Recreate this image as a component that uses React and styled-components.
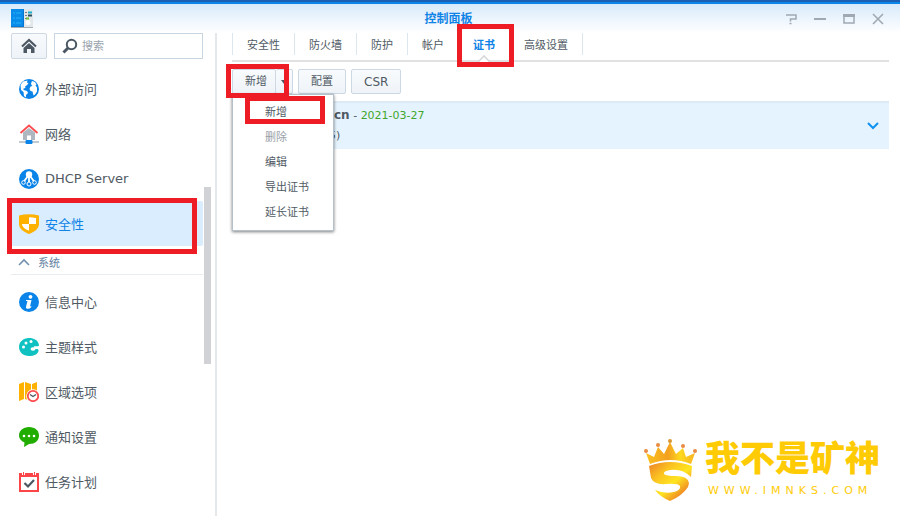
import React, { useState } from 'react';
import styled, { createGlobalStyle } from 'styled-components';

const GlobalStyle = createGlobalStyle`
  * {
    box-sizing: border-box;
  }

  body {
    margin: 0;
    background: #ffffff;
    color: #505a64;
    font-family: 'DejaVu Sans', 'Noto Sans CJK SC', sans-serif;
    font-size: 11px;
  }

  button,
  input {
    font: inherit;
    color: inherit;
  }
`;

const StyledWindow = styled.div`
  display: flex;
  flex-direction: column;
  min-height: 100vh;
  overflow: hidden;
  position: relative;
  border-top: 2px solid #1a5fb4;
`;

const StyledTitleBar = styled.header`
  display: grid;
  grid-template-columns: 1fr auto 1fr;
  align-items: center;
  height: 31px;
  padding: 0 14px 0 11px;
  border-top: 2px solid #0a86ea;
  background: linear-gradient(#d8eafa, #ffffff);
`;

const StyledTitle = styled.h1`
  margin: 0;
  font-size: 12px;
  line-height: 16px;
  color: #0f83e6;
`;

const StyledWindowButtons = styled.div`
  display: flex;
  justify-content: flex-end;
  gap: 13px;
`;

const StyledIconButton = styled.button`
  display: flex;
  align-items: center;
  justify-content: center;
  width: 16px;
  height: 16px;
  padding: 0;
  border: none;
  background: none;
  cursor: pointer;
`;

const StyledBody = styled.div`
  display: flex;
  flex: 1;
`;

const StyledSidebar = styled.aside`
  flex: none;
  width: 217px;
  padding-left: 11px;
  border-right: 2px solid #e4e8ea;
`;

const StyledSearchRow = styled.div`
  display: flex;
  gap: 7px;
  width: 192px;
  margin-bottom: 7px;
`;

const StyledHomeButton = styled.button`
  display: flex;
  align-items: center;
  justify-content: center;
  width: 36px;
  height: 26px;
  padding: 0;
  border: 1px solid #ccd8e4;
  border-radius: 2px;
  background: linear-gradient(#f8fafc, #eef3f8);
  cursor: pointer;
`;

const StyledSearch = styled.label`
  display: flex;
  flex: 1;
  align-items: center;
  gap: 4px;
  min-width: 0;
  height: 26px;
  padding-left: 7px;
  border: 1px solid #c8d6e4;
`;

const StyledSearchInput = styled.input`
  flex: 1;
  min-width: 0;
  height: 20px;
  padding: 0;
  border: none;
  outline: none;
  background: none;

  &::placeholder {
    color: #98a2ac;
    opacity: 1;
  }
`;

const StyledNavArea = styled.div`
  display: flex;
  gap: 1px;
`;

const StyledNav = styled.nav`
  width: 192px;
`;

const StyledNavItem = styled.a`
  position: relative;
  display: flex;
  align-items: center;
  gap: 6px;
  height: 45px;
  padding-left: 8px;
  border-radius: 2px;
  font-size: 13px;
  text-decoration: none;
  color: ${props => props.$active ? '#0f83e6' : '#505a64'};
  background: ${props => props.$active ? '#d9edff' : 'none'};
`;

const StyledGroup = styled.button`
  display: flex;
  align-items: center;
  gap: 8px;
  width: 100%;
  height: 29px;
  margin-bottom: 4px;
  padding: 4px 0 0 7px;
  border: none;
  border-bottom: 1px solid #e8edf1;
  background: none;
  color: #6282a0;
  cursor: pointer;
`;

const StyledScrollThumb = styled.div`
  width: 7px;
  height: 177px;
  margin-top: 121px;
  background: #d0d2d5;
`;

const StyledMain = styled.main`
  flex: 1;
  min-width: 0;
  padding: 0 11px 0 15px;
`;

const StyledTabs = styled.div`
  display: flex;
  height: 29px;
  border-bottom: 2px solid #e0e1e2;
`;

const StyledTab = styled.button`
  position: relative;
  height: 22px;
  padding: 0 14px;
  border: none;
  border-left: 1px solid #dce6ee;
  background: none;
  font-weight: ${props => props.$active ? 'bold' : 'normal'};
  color: ${props => props.$active ? '#0f83e6' : '#505a64'};
  white-space: nowrap;
  cursor: pointer;

  &:last-child {
    border-right: 1px solid #dce6ee;
  }
`;

const StyledTabArrow = styled.svg`
  position: absolute;
  left: 50%;
  top: 22px;
  margin-left: -6px;
`;

const StyledToolbar = styled.div`
  display: flex;
  gap: 5px;
  padding: 7px 0;
`;

const StyledSplit = styled.div`
  position: relative;
  display: flex;
  width: 61px;
`;

const StyledButton = styled.button`
  height: 25px;
  padding: 0 12px;
  border: 1px solid #ccd8e4;
  border-radius: 2px;
  background: linear-gradient(#f9fbfd, #eef3f8);
  font-size: ${props => props.$latin ? '12px' : '11px'};
  line-height: 16px;
  white-space: nowrap;
  cursor: pointer;
`;

const StyledMainButton = styled(StyledButton)`
  padding: 0 8px 0 12px;
`;

const StyledArrowButton = styled(StyledButton)`
  display: flex;
  flex: 1;
  align-items: center;
  justify-content: center;
  padding: 0;
  border-left: none;
`;

const StyledMenu = styled.ul`
  position: absolute;
  z-index: 1;
  top: 25px;
  left: 0;
  width: 102px;
  margin: 0;
  padding: 3px 0 7px;
  list-style: none;
  border: 1px solid #b4c0ca;
  background: #ffffff;
  box-shadow: 0 1px 3px rgba(0, 0, 0, 0.5);
`;

const StyledMenuRow = styled.li`
  position: relative;
`;

const StyledMenuItem = styled.button`
  display: block;
  width: 100%;
  height: 25px;
  padding: 0 0 0 32px;
  border: none;
  background: none;
  text-align: left;
  color: ${props => props.disabled ? '#9aa1a8' : '#505a64'};
`;

const StyledMarker = styled.span`
  position: absolute;
  z-index: 2;
  inset: ${props => props.$inset};
  border: 5px solid #ee1c25;
  pointer-events: none;
`;

const StyledCertificate = styled.section`
  display: flex;
  align-items: center;
  justify-content: space-between;
  padding: 2px 8px 3px 97px;
  border-top: 2px solid #dceaf5;
  background: #e5f3fe;
`;

const StyledCertLine = styled.p`
  margin: 0;
  padding-left: ${props => props.$main ? '5px' : '0'};
  line-height: 20px;
`;

const StyledDomain = styled.strong`
  font-size: 12px;
`;

const StyledDate = styled.span`
  color: #3fa62b;
`;

const StyledBrand = styled.div`
  position: absolute;
  right: 20px;
  bottom: 11px;
  display: flex;
  align-items: center;
  gap: 8px;
  color: #ffcb05;
`;

const StyledBrandName = styled.div`
  font-family: 'Noto Sans CJK SC', sans-serif;
  font-size: 35px;
  font-weight: 900;
  line-height: 42px;
`;

const StyledBrandUrl = styled.div`
  padding-left: 3px;
  font-family: 'DejaVu Sans', sans-serif;
  font-size: 11px;
  line-height: 28px;
  letter-spacing: 5px;
`;

function AppIcon() {
  return (
    <svg width="22" height="19" viewBox="0 0 22 19">
      <rect x="0" y="17" width="22" height="2" fill="#a8b0b6" />
      <rect x="12" y="0" width="10" height="18" fill="#e3e7ea" />
      <rect x="0" y="0" width="13" height="18" fill="#0877d4" />
      <rect x="0" y="0" width="12" height="17" fill="#0a8ceb" />
      <path d="M2 4h2M5 4h5M2 9h2M5 9h5M2 14h2M5 14h5" stroke="#24b2f5" />
      <path d="M14 3.5h2M14 6.5h2M14 9.5h2" stroke="#737b82" />
      <path d="M17 3.5h4" stroke="#18afca" strokeWidth="2" />
      <path d="M17 6.5h4" stroke="#2c4f5d" strokeWidth="2" />
      <path d="M15 9.5h3" stroke="#70bd30" strokeWidth="2" />
      <circle cx="17" cy="13.5" r="2.5" fill="#fff" />
    </svg>
  );
}

function HomeIcon() {
  return (
    <svg width="16" height="16" viewBox="0 0 16 16">
      <path d="M1 8.500 8 2l7 6.500" fill="none" stroke="#4b5864" strokeWidth="2.200" />
      <path d="M2.500 10 8 5l5.500 5v5H10v-4H6v4H2.500z" fill="#4b5864" />
    </svg>
  );
}

function SearchIcon() {
  return (
    <svg width="16" height="16" viewBox="0 0 16 16">
      <circle cx="9.5" cy="6.5" r="4.7" fill="none" stroke="#4b5864" strokeWidth="2" />
      <path d="m6 10-4.5 4.5" stroke="#4b5864" strokeWidth="3" />
    </svg>
  );
}

const navIcons = {
  globe: (
    <>
      <circle cx="10" cy="10" r="10" fill="#0a84e8" />
      <path d="M1.500 6 4 2.500 8.500 1.500 8 3.500l1.500 1-2 2L6 7.500l.5 1.500-2 .5v1.500l3.500 1 1 2-2 2v2.500l-2-1.500-.5-4L2 11z" fill="#fff" />
      <path d="m12 4.500 1-2.500 3 1 1.500 2.500-1 1 1.500 2v4l-2 3-1.500 1-1-4-2-.5L10.500 10l1-2.500 2-.5-1-1z" fill="#fff" />
    </>
  ),
  network: (
    <>
      <path d="M4 8.500 10 4l6 4.500V16H4z" fill="#aeb7c0" />
      <path d="M8 16v-4.500h4V16z" fill="#fff" />
      <path d="m1.500 9 8.500-7.500L18.500 9" fill="none" stroke="#fb4d50" strokeWidth="1.800" />
      <path d="M0 18h20" stroke="#aeb7c0" strokeWidth="1.500" />
      <rect x="6.500" y="16" width="7" height="4" rx="1" fill="#0a84e8" />
    </>
  ),
  dhcp: (
    <>
      <circle cx="10" cy="10" r="10" fill="#0a84e8" />
      <circle cx="10" cy="5.500" r="3.200" fill="#fff" />
      <path d="M9 7 4.500 13M10 8v6M11 7l4.500 6" stroke="#fff" strokeWidth="1.800" />
      <circle cx="4.500" cy="13.500" r="1.800" fill="#0a84e8" stroke="#fff" />
      <circle cx="10" cy="15" r="2" fill="#0a84e8" stroke="#fff" />
      <circle cx="15.500" cy="13.500" r="1.800" fill="#0a84e8" stroke="#fff" />
    </>
  ),
  shield: (
    <>
      <path d="M0 1.500Q10-1 20 1.500V10c0 5-5 8-10 10C5 18 0 15 0 10z" fill="#ffb100" />
      <path d="M10 3.200q3.500 0 7 .8v6h-7zM3 10h7v6.800C6 15 3 13 3 10z" fill="#fff" />
    </>
  ),
  info: (
    <>
      <circle cx="10" cy="10" r="10" fill="#0a84e8" />
      <circle cx="11.500" cy="4.800" r="1.900" fill="#fff" />
      <path d="M7 8h5.500L11 14.500l1.500-.5-.5 1.500q-2 2-4.500 1-1-.5-.3-2.500L8.500 9H7z" fill="#fff" />
    </>
  ),
  palette: (
    <>
      <path d="M20 8C19 3 15 1 10 1 4 1 0 5 0 10s4 9 10 9c5 0 9-2 9.500-5 .3-1.800-1-2.200-2.500-2-2 .3-3-1-2-2.500 1-1 5 1 5-1.500z" fill="#0fc1c1" />
      <circle cx="4.500" cy="10" r="1.500" fill="#fff" />
      <circle cx="7" cy="6" r="1.500" fill="#fff" />
      <circle cx="12" cy="4.500" r="1.500" fill="#fff" />
      <ellipse cx="14" cy="12" rx="2.500" ry="1.800" fill="#fff" />
    </>
  ),
  region: (
    <>
      <path d="M0 2 5 0v17l-5 2zM6 0l6 2v17l-6-2zM13 2l5-2v17l-5 2z" fill="#ffb100" />
      <circle cx="14" cy="14" r="6.800" fill="#fff" />
      <circle cx="14" cy="14" r="5.200" fill="#fff" stroke="#fb4d50" strokeWidth="1.800" />
      <path d="m11 12.500 3 2 3-2" fill="none" stroke="#4b5864" strokeWidth="1.400" />
    </>
  ),
  notice: (
    <>
      <path d="M10 0C4 0 0 4 0 8.500c0 3 2 5.500 5.500 7L5 20l5-3c6 0 10-3.500 10-8.500S16 0 10 0z" fill="#20ad00" />
      <circle cx="5" cy="9" r="1.300" fill="#fff" />
      <circle cx="10" cy="9" r="1.300" fill="#fff" />
      <circle cx="15" cy="9" r="1.300" fill="#fff" />
    </>
  ),
  task: (
    <>
      <path d="M0 1h20v19H0z" fill="#fb4549" />
      <path d="M2 5h16v13H2z" fill="#fff" />
      <path d="M4.500 0v3M15.500 0v3" stroke="#fff" strokeWidth="3" />
      <path d="M4.500 0v3M15.500 0v3" stroke="#fb4549" />
      <path d="m5.500 11 3.500 3.500L15 8" fill="none" stroke="#4b5864" strokeWidth="2.200" />
    </>
  ),
};

function NavIcon({ name }) {
  return (
    <svg width="20" height="20" viewBox="0 0 20 20">
      {navIcons[name]}
    </svg>
  );
}

function CrownLogo() {
  return (
    <svg width="53" height="62" viewBox="0 0 53 62">
      <defs>
        <linearGradient id="crown" x1="0" y1="0" x2="1" y2="0">
          <stop offset="0" stopColor="#fcc21f" />
          <stop offset="0.45" stopColor="#f3a01f" />
          <stop offset="0.7" stopColor="#ffd91f" />
          <stop offset="1" stopColor="#f9b320" />
        </linearGradient>
        <linearGradient id="gold" x1="0" y1="0" x2="1" y2="1">
          <stop offset="0" stopColor="#ec7e26" />
          <stop offset="0.3" stopColor="#fbc321" />
          <stop offset="0.55" stopColor="#ffe51f" />
          <stop offset="0.8" stopColor="#f08a24" />
          <stop offset="1" stopColor="#fbc321" />
        </linearGradient>
      </defs>
      <path d="m2 14 8 4 4-10 6 7 6-12 6 12 7-6 3 9 9-4-4 11q-20-8-41 0z" fill="url(#crown)" />
      <path
        d="M5 27q21-8 43 0l-1 11Q38 29 26 31q-7 1-6 4 2 2 12 2 12 0 13 7l-1 4q-6 9-18 14-10-4-15-11 9 4 19 2 7-2 6-6-2-3-14-2-12 1-15-6z"
        fill="url(#gold)"
      />
      <circle cx="2" cy="12" r="2" fill="#e98b43" />
      <circle cx="14" cy="6" r="2" fill="#e98b43" />
      <circle cx="26" cy="2" r="2" fill="#d89732" />
      <circle cx="39" cy="7" r="2" fill="#e98b43" />
      <circle cx="51" cy="12" r="2" fill="#e98b43" />
    </svg>
  );
}

const mainItems = [
  { icon: 'globe', label: '外部访问' },
  { icon: 'network', label: '网络' },
  { icon: 'dhcp', label: 'DHCP Server' },
  { icon: 'shield', label: '安全性' },
];

const systemItems = [
  { icon: 'info', label: '信息中心' },
  { icon: 'palette', label: '主题样式' },
  { icon: 'region', label: '区域选项' },
  { icon: 'notice', label: '通知设置' },
  { icon: 'task', label: '任务计划' },
];

const tabs = ['安全性', '防火墙', '防护', '帐户', '证书', '高级设置'];
const menuItems = ['新增', '删除', '编辑', '导出证书', '延长证书'];

function NavItem({ icon, label, active }) {
  return (
    <StyledNavItem href="#" $active={active}>
      <NavIcon name={icon} />
      {label}
      {active && <StyledMarker $inset="-3px 6px -8px -4px" />}
    </StyledNavItem>
  );
}

function Sidebar() {
  const [open, setOpen] = useState(true);

  return (
    <StyledSidebar>
      <StyledSearchRow>
        <StyledHomeButton aria-label="主页"><HomeIcon /></StyledHomeButton>
        <StyledSearch>
          <SearchIcon />
          <StyledSearchInput type="text" placeholder="搜索" aria-label="搜索" />
        </StyledSearch>
      </StyledSearchRow>
      <StyledNavArea>
        <StyledNav>
          {mainItems.map(item => (
            <NavItem key={item.icon} {...item} active={item.icon === 'shield'} />
          ))}
          <StyledGroup onClick={() => setOpen(!open)} aria-expanded={open}>
            <svg width="12" height="8" viewBox="0 0 12 8">
              <path d="m1 7 5-5 5 5" fill="none" stroke="#7391ad" strokeWidth="1.6" />
            </svg>
            系统
          </StyledGroup>
          {open && systemItems.map(item => <NavItem key={item.icon} {...item} />)}
        </StyledNav>
        <StyledScrollThumb />
      </StyledNavArea>
    </StyledSidebar>
  );
}

function AddButton() {
  const [menuOpen, setMenuOpen] = useState(true);

  return (
    <StyledSplit>
      <StyledMainButton>新增</StyledMainButton>
      <StyledArrowButton aria-label="更多" onClick={() => setMenuOpen(!menuOpen)}>
        <svg width="6" height="4" viewBox="0 0 6 4"><path d="M0 0h6L3 4z" fill="#4b5864" /></svg>
      </StyledArrowButton>
      <StyledMarker $inset="-5px 4px -4px -6px" />
      {menuOpen && (
        <StyledMenu>
          {menuItems.map(item => (
            <StyledMenuRow key={item}>
              <StyledMenuItem disabled={item === '删除'}>{item}</StyledMenuItem>
              {item === '新增' && <StyledMarker $inset="-2px 8px -1px 12px" />}
            </StyledMenuRow>
          ))}
        </StyledMenu>
      )}
    </StyledSplit>
  );
}

function App() {
  const [tab, setTab] = useState('证书');

  return (
    <StyledWindow>
      <GlobalStyle />
      <StyledTitleBar>
        <AppIcon />
        <StyledTitle>控制面板</StyledTitle>
        <StyledWindowButtons>
          <StyledIconButton aria-label="帮助">
            <svg width="12" height="12" viewBox="0 0 12 12">
              <path d="M1 2h10v4H5.500v2.500" fill="none" stroke="#a0a9b2" strokeWidth="1.500" />
              <path d="M4.500 10.500h2" stroke="#a0a9b2" strokeWidth="1.500" />
            </svg>
          </StyledIconButton>
          <StyledIconButton aria-label="最小化">
            <svg width="12" height="12" viewBox="0 0 12 12">
              <path d="M0 6h12" stroke="#a0a9b2" strokeWidth="2" />
            </svg>
          </StyledIconButton>
          <StyledIconButton aria-label="最大化">
            <svg width="12" height="12" viewBox="0 0 12 12">
              <path d="M1 2v8h10V2z" fill="none" stroke="#a0a9b2" strokeWidth="1.500" />
              <path d="M0 2.500h12" stroke="#a0a9b2" strokeWidth="3" />
            </svg>
          </StyledIconButton>
          <StyledIconButton aria-label="关闭">
            <svg width="12" height="12" viewBox="0 0 12 12">
              <path d="m1 1 10 10M11 1 1 11" stroke="#a0a9b2" strokeWidth="1.600" />
            </svg>
          </StyledIconButton>
        </StyledWindowButtons>
      </StyledTitleBar>
      <StyledBody>
        <Sidebar />
        <StyledMain>
          <StyledTabs role="tablist">
            {tabs.map(name => (
              <StyledTab
                key={name}
                role="tab"
                aria-selected={name === tab}
                $active={name === tab}
                onClick={() => setTab(name)}
              >
                {name}
                {name === tab && (
                  <StyledTabArrow width="12" height="7" viewBox="0 0 12 7">
                    <path d="M0 7 6 1l6 6z" fill="#fff" />
                    <path d="m0 7 6-6 6 6" fill="none" stroke="#d4d6d8" strokeWidth="1.500" />
                  </StyledTabArrow>
                )}
                {name === '证书' && <StyledMarker $inset="-9px -5px -12px -2px" />}
              </StyledTab>
            ))}
          </StyledTabs>
          <StyledToolbar>
            <AddButton />
            <StyledButton>配置</StyledButton>
            <StyledButton $latin>CSR</StyledButton>
          </StyledToolbar>
          <StyledCertificate>
            <div>
              <StyledCertLine $main>
                <StyledDomain>cn</StyledDomain> - <StyledDate>2021-03-27</StyledDate>
              </StyledCertLine>
              <StyledCertLine>5)</StyledCertLine>
            </div>
            <StyledIconButton aria-label="展开">
              <svg width="12" height="8" viewBox="0 0 12 8">
                <path d="m1 1 5 5 5-5" fill="none" stroke="#0f92f0" strokeWidth="2" />
              </svg>
            </StyledIconButton>
          </StyledCertificate>
        </StyledMain>
      </StyledBody>
      <StyledBrand>
        <CrownLogo />
        <div>
          <StyledBrandName>我不是矿神</StyledBrandName>
          <StyledBrandUrl>WWW.IMNKS.COM</StyledBrandUrl>
        </div>
      </StyledBrand>
    </StyledWindow>
  );
}

export default App;
